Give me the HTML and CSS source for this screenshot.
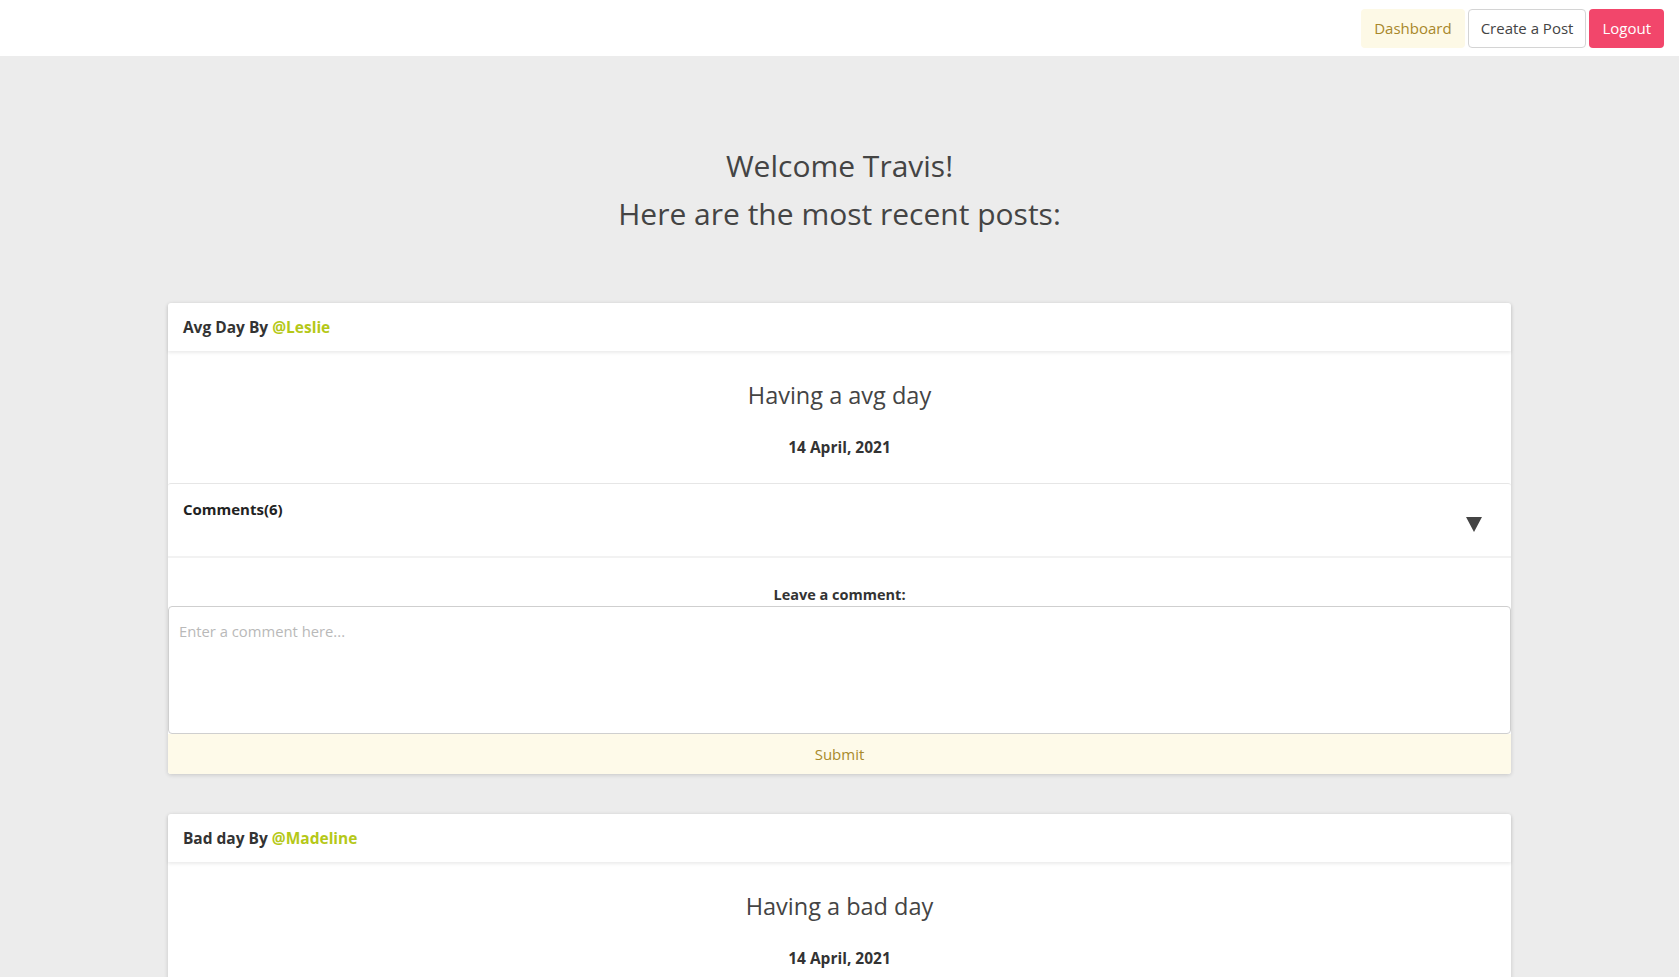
FILE: index.html
```html
<!DOCTYPE html>
<html lang="en">
<head>
<meta charset="utf-8">
<title>Dashboard</title>
<link rel="stylesheet" href="styles.css">
</head>
<body>
<header class="topbar">
  <a class="btn btn-dashboard" href="#">Dashboard</a>
  <a class="btn btn-create" href="#">Create a Post</a>
  <a class="btn btn-logout" href="#">Logout</a>
</header>
<main class="main">
  <h1 class="welcome">Welcome Travis!<br>Here are the most recent posts:</h1>

  <article class="card">
    <div class="card-header">Avg Day By&nbsp;<span class="user">@Leslie</span></div>
    <div class="card-body">
      <p class="post-text">Having a avg day</p>
      <p class="post-date">14 April, 2021</p>
    </div>
    <div class="comments">
      <span class="comments-title">Comments(6)</span>
      <span class="caret"></span>
    </div>
    <form class="comment-form">
      <label class="comment-label" for="c1">Leave a comment:</label>
      <textarea id="c1" class="comment-input" placeholder="Enter a comment here..."></textarea>
      <button type="button" class="submit">Submit</button>
    </form>
  </article>

  <article class="card">
    <div class="card-header">Bad day By&nbsp;<span class="user">@Madeline</span></div>
    <div class="card-body">
      <p class="post-text">Having a bad day</p>
      <p class="post-date">14 April, 2021</p>
    </div>
    <div class="comments">
      <span class="comments-title">Comments(2)</span>
      <span class="caret"></span>
    </div>
    <form class="comment-form">
      <label class="comment-label" for="c2">Leave a comment:</label>
      <textarea id="c2" class="comment-input" placeholder="Enter a comment here..."></textarea>
      <button type="button" class="submit">Submit</button>
    </form>
  </article>
</main>
</body>
</html>
```

FILE: styles.css
```css
* { box-sizing: border-box; }

body {
  margin: 0;
  background: #ececec;
  font-family: "Open Sans", "Noto Sans", "Liberation Sans", sans-serif;
  color: #333;
}

.topbar {
  height: 56px;
  background: #fff;
  display: flex;
  justify-content: flex-end;
  align-items: center;
  gap: 3px;
  padding: 0 15px;
}

.btn {
  display: inline-flex;
  align-items: center;
  height: 39px;
  padding: 0 12px;
  font-size: 15px;
  text-decoration: none;
  border-radius: 4px;
  border: 1px solid transparent;
}

.btn-dashboard { background: #fdf9e6; color: #a8872a; }
.btn-create { background: #fff; color: #444; border-color: #d4d4d4; }
.btn-logout { background: #f2466b; color: #fff; }

.main {
  padding-top: 86px;
  padding-bottom: 40px;
}

.welcome {
  margin: 0 0 65px;
  text-align: center;
  font-size: 30px;
  font-weight: 400;
  line-height: 48px;
  color: #444;
}

.card {
  width: 80%;
  margin: 0 auto 40px;
  background: #fff;
  border-radius: 3px;
  box-shadow: 0 1px 4px rgba(0, 0, 0, 0.16);
}

.card-header {
  height: 48px;
  display: flex;
  align-items: center;
  padding: 0 15px;
  font-size: 15.5px;
  font-weight: 700;
  color: #333;
  position: relative;
  box-shadow: 0 2px 3px rgba(0, 0, 0, 0.08);
}

.user { color: #b5c818; }

.card-body {
  padding: 26px 15px 24px;
  text-align: center;
}

.post-text {
  margin: 0 0 22px;
  font-size: 23.5px;
  line-height: 36px;
  color: #444;
}

.post-date {
  margin: 0;
  font-size: 15.5px;
  font-weight: 700;
  line-height: 24px;
  color: #333;
}

.comments {
  height: 75px;
  display: flex;
  justify-content: space-between;
  align-items: flex-start;
  padding: 13px 29px 0 15px;
  border-top: 1px solid #e6e6e6;
  border-bottom: 2px solid #f2f2f2;
  border-radius: 3px 3px 0 0;
}

.comments-title {
  font-size: 15px;
  font-weight: 700;
  line-height: 24px;
  color: #222;
}

.caret {
  margin-top: 20px;
  width: 0;
  height: 0;
  border-left: 8px solid transparent;
  border-right: 8px solid transparent;
  border-top: 15px solid #444;
}

.comment-form {
  display: flex;
  flex-direction: column;
}

.comment-label {
  margin-top: 27px;
  margin-bottom: 1px;
  text-align: center;
  font-size: 14.5px;
  font-weight: 700;
  line-height: 20px;
  color: #333;
}

.comment-input {
  display: block;
  width: 100%;
  height: 128px;
  margin: 0;
  padding: 13px 10px;
  border: 1px solid #cfcfcf;
  border-radius: 4px;
  font-family: inherit;
  font-size: 14.8px;
  line-height: 22px;
  resize: none;
  color: #333;
}

.comment-input::placeholder { color: #b9b9b9; }

.submit {
  height: 40px;
  border: none;
  background: #fefae9;
  color: #a88a2b;
  font-family: inherit;
  font-size: 15px;
  border-radius: 0 0 3px 3px;
}
```
